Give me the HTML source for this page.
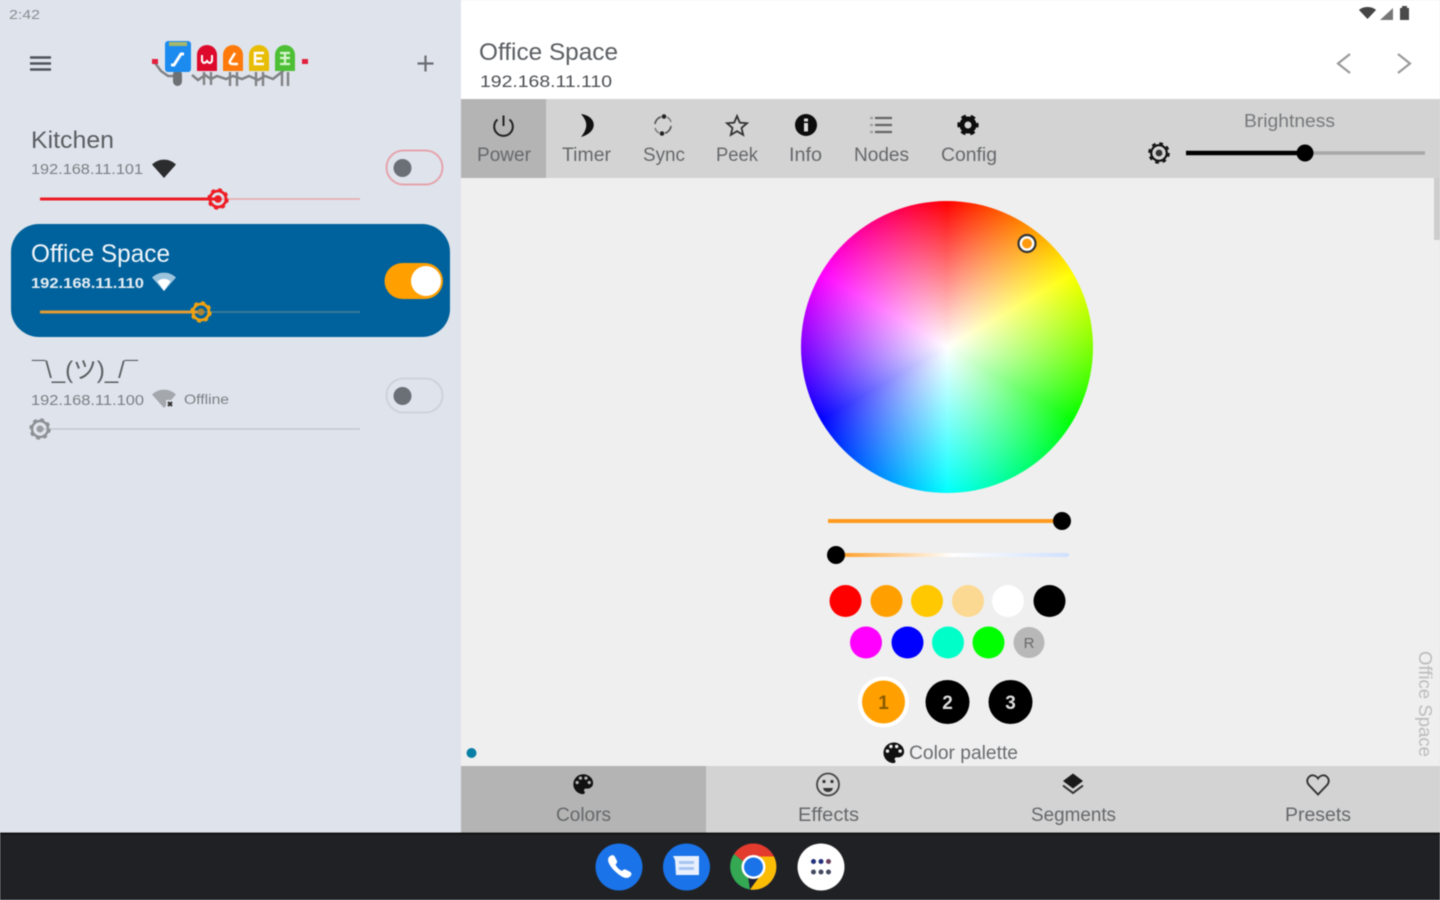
<!DOCTYPE html>
<html lang="en"><head><meta charset="utf-8"><title>WLED</title>
<style>
html,body{margin:0;padding:0;width:1440px;height:900px;overflow:hidden;background:#dfe4ec}
svg{display:block;filter:blur(.6px)}
text{font-family:"Liberation Sans","Noto Sans CJK JP",sans-serif}
</style></head><body>
<svg width="1440" height="900" viewBox="0 0 1440 900" xmlns="http://www.w3.org/2000/svg">
<defs>
<linearGradient id="cct" x1="0" x2="1" y1="0" y2="0"><stop offset="0" stop-color="#ff9a1f"/><stop offset=".5" stop-color="#fff"/><stop offset="1" stop-color="#cfe0ff"/></linearGradient>
<path id="wifi" d="M-12-4.500C-5-11 5-11 12-4.500L0 9Z"/>
<path id="palette" fill-rule="evenodd" d="M12 3a9 9 0 0 0 0 18c.83 0 1.500-.67 1.500-1.500 0-.39-.15-.74-.39-1.010-.23-.26-.38-.61-.38-.99 0-.83.67-1.500 1.500-1.500H16c2.760 0 5-2.240 5-5 0-4.420-4.030-8-9-8zm-5.500 9a1.500 1.500 0 1 1 0-3 1.500 1.500 0 0 1 0 3zm3-4a1.500 1.500 0 1 1 0-3 1.500 1.500 0 0 1 0 3zm5 0a1.500 1.500 0 1 1 0-3 1.500 1.500 0 0 1 0 3zm3 4a1.500 1.500 0 1 1 0-3 1.500 1.500 0 0 1 0 3z"/>
</defs>

<!-- backgrounds -->
<rect width="461" height="900" fill="#dfe4ec"/>
<rect x="461" width="979" height="99" fill="#fff"/>
<rect x="461" y="99" width="979" height="79" fill="#d3d3d3"/>
<rect x="461" y="99" width="85" height="79" fill="#b4b4b4"/>
<rect x="461" y="178" width="979" height="588" fill="#efefef"/>
<rect x="461" y="766" width="979" height="67" fill="#d3d3d3"/>
<rect x="461" y="766" width="245" height="67" fill="#b4b4b4"/>
<rect y="833" width="1440" height="67" fill="#202124"/>
<rect y="832.600" width="1440" height="1.600" fill="#0c0c0c"/>

<!-- left header -->
<text x="9" y="19" font-size="13" fill="#8a8d91" textLength="31" lengthAdjust="spacingAndGlyphs">2:42</text>
<g stroke="#50545a" stroke-width="2.400"><path d="M30 57.500H51M30 63.500H51M30 69.500H51"/></g>
<path d="M417.500 63.500H433.500M425.500 55.500V71.500" stroke="#6a6d72" stroke-width="2.200"/>

<!-- logo -->
<g>
<path d="M155 63L161 71L168 76H174M192 75l6 5 7-5 6 4 6-3 9 3 7-3 9 3 7-3 9 4 7-4 8 3 5-4 5-4 5-8" fill="none" stroke="#808285" stroke-width="2.500"/>
<path d="M204 72v13M211 72v13M230 72v14M237 72v14M256 72v14M263 72v14M282 72v14M288 72v14" stroke="#808285" stroke-width="2.400"/>
<rect x="173" y="70" width="9" height="16" rx="4.500" fill="#6e7174"/>
<rect x="152" y="59" width="6" height="5" fill="#e2203c"/><rect x="302" y="59" width="6" height="5" fill="#e2203c"/>
<rect x="165" y="41" width="26" height="31" rx="3" fill="#1b8bf0"/>
<rect x="169" y="42" width="18" height="4" fill="#a6b86a"/>
<path d="M171 65h3l7-11h3" fill="none" stroke="#fff" stroke-width="3"/>
<path d="M197 71V55a10 10 0 0 1 20 0V71Z" fill="#dd0a2c"/>
<path d="M223 71V55a10 10 0 0 1 20 0V71Z" fill="#ff7a0a"/>
<path d="M249 71V55a10 10 0 0 1 20 0V71Z" fill="#e8bd05"/>
<path d="M275 71V55a10 10 0 0 1 20 0V71Z" fill="#4dbf35"/>
<path d="M202 55v6q2 4 5 0q3 4 5 0v-6" fill="none" stroke="#fff" stroke-width="2"/>
<path d="M235 53l-5 8q-1 3 3 3h5" fill="none" stroke="#fff" stroke-width="2.500"/>
<path d="M264 53h-9v11h9M255 58.500h7" fill="none" stroke="#fff" stroke-width="2.400"/>
<path d="M280 53h10M280 64h10M285 53v11M280 58h10" fill="none" stroke="#d8f5cf" stroke-width="2.200"/>
</g>

<!-- Kitchen -->
<text x="31" y="148" font-size="24" fill="#5b5e62" textLength="83" lengthAdjust="spacingAndGlyphs">Kitchen</text>
<text x="31" y="174" font-size="14.500" fill="#7d8084" textLength="112" lengthAdjust="spacingAndGlyphs">192.168.11.101</text>
<use href="#wifi" x="164" y="169" fill="#2b2c2e"/>
<rect x="386.500" y="150.500" width="56" height="34" rx="17" fill="none" stroke="#e6a3ac" stroke-width="2"/>
<circle cx="402.500" cy="168" r="9" fill="#6b6f76"/>
<path d="M40 199H218" stroke="#ee1c24" stroke-width="3"/>
<path d="M218 199H360" stroke="#eba5a8" stroke-width="1.600"/>
<g transform="translate(218 199)" fill="none" stroke="#ee1c24">
<circle r="9.800" stroke-width="1.800" stroke-dasharray="3.800 3.900"/><circle r="8" stroke-width="2.800"/><circle r="3.800" fill="#ee1c24" stroke="none"/></g>

<!-- Office Space card -->
<rect x="11" y="224" width="439" height="113" rx="28" fill="#00629c"/>
<text x="31" y="262" font-size="25" fill="#f2f6fa" textLength="139" lengthAdjust="spacingAndGlyphs">Office Space</text>
<text x="31" y="288" font-size="15" fill="#e6edf3" font-weight="bold" textLength="113" lengthAdjust="spacingAndGlyphs">192.168.11.110</text>
<use href="#wifi" x="164" y="282" fill="#9cc4de"/>
<path d="M157.500 281.500C161 278 167 278 170.500 281.500L164 291Z" fill="#fff"/>
<rect x="384.500" y="263" width="58.500" height="36" rx="18" fill="#ff9f00"/>
<circle cx="426" cy="281" r="15" fill="#fff"/>
<path d="M40 312H201" stroke="#e29a34" stroke-width="3"/>
<path d="M201 312H360" stroke="#48809a" stroke-width="1.600"/>
<g transform="translate(201 312)" fill="none" stroke="#f2a10e">
<circle r="9.800" stroke-width="1.800" stroke-dasharray="3.800 3.900"/><circle r="8" stroke-width="2.800"/><circle r="3.500" fill="#a88536" stroke="none"/></g>

<!-- Offline -->
<text x="32" y="378" font-size="24" fill="#5b5e62" textLength="106" lengthAdjust="spacingAndGlyphs">¯\_(ツ)_/¯</text>
<text x="31" y="405" font-size="14.500" fill="#7d8084" textLength="113" lengthAdjust="spacingAndGlyphs">192.168.11.100</text>
<use href="#wifi" x="164" y="399" fill="#a4a7ab"/>
<rect x="166" y="400" width="10" height="9" fill="#dfe4ec"/>
<path d="M168 402l4 4M172 402l-4 4" stroke="#333" stroke-width="2"/>
<text x="184" y="404" font-size="14" fill="#7d8084" textLength="45" lengthAdjust="spacingAndGlyphs">Offline</text>
<rect x="386.500" y="378.500" width="56" height="34" rx="17" fill="none" stroke="#cfd2d8" stroke-width="2"/>
<circle cx="402.500" cy="396" r="9" fill="#6b6f76"/>
<path d="M40 429H360" stroke="#c4c7cb" stroke-width="1.600"/>
<g transform="translate(40 429)" fill="none" stroke="#8c8f93">
<circle r="9.800" stroke-width="1.800" stroke-dasharray="3.800 3.900"/><circle r="8" stroke-width="2.400"/><circle r="3.500" fill="#9a9da1" stroke="none"/></g>

<!-- right header -->
<text x="479" y="60" font-size="24" fill="#5b5e62" textLength="139" lengthAdjust="spacingAndGlyphs">Office Space</text>
<text x="480" y="87" font-size="17" fill="#4c4f53" textLength="132" lengthAdjust="spacingAndGlyphs">192.168.11.110</text>
<path d="M1359 10C1363 6 1372 6 1376 10L1367.500 19Z" fill="#444"/>
<path d="M1380 20L1393 8V20Z" fill="#777"/>
<path d="M1400 8h2v-2h5v2h2v12h-9Z" fill="#4a4a4a"/>
<path d="M1350 54L1338 63.500L1350 73" fill="none" stroke="#9a9a9a" stroke-width="2.200"/>
<path d="M1398 54L1410 63.500L1398 73" fill="none" stroke="#9a9a9a" stroke-width="2.200"/>

<!-- toolbar -->
<g font-size="19" fill="#66686b">
<text x="477" y="161" textLength="54" lengthAdjust="spacingAndGlyphs">Power</text>
<text x="562" y="161" textLength="49" lengthAdjust="spacingAndGlyphs">Timer</text>
<text x="643" y="161" textLength="42" lengthAdjust="spacingAndGlyphs">Sync</text>
<text x="716" y="161" textLength="42" lengthAdjust="spacingAndGlyphs">Peek</text>
<text x="789" y="161" textLength="33" lengthAdjust="spacingAndGlyphs">Info</text>
<text x="854" y="161" textLength="55" lengthAdjust="spacingAndGlyphs">Nodes</text>
<text x="941" y="161" textLength="56" lengthAdjust="spacingAndGlyphs">Config</text>
</g>
<!-- power -->
<path d="M497.500 119.500A9.300 9.300 0 1 0 509.500 119.500M503.500 115.500V126" fill="none" stroke="#222" stroke-width="2"/>
<!-- moon -->
<path d="M581 114C597 116 599 132 581 137C588 128 588 122 581 114Z" fill="#111"/>
<!-- sync -->
<path d="M655 124A8.500 8.500 0 0 1 661 116.800M671 126A8.500 8.500 0 0 1 665 133.200" fill="none" stroke="#555" stroke-width="1.700"/>
<path d="M667 117A8.500 8.500 0 0 1 671 122M659 133A8.500 8.500 0 0 1 655 128" fill="none" stroke="#777" stroke-width="1.400"/>
<circle cx="664" cy="116.500" r="2.300" fill="#222"/><circle cx="662" cy="133.500" r="2.300" fill="#222"/>
<!-- star -->
<path d="M737 116l2.800 6.600 7.200.6-5.500 4.700 1.700 7-6.200-3.700-6.200 3.700 1.700-7-5.500-4.700 7.200-.6Z" fill="none" stroke="#333" stroke-width="1.800"/>
<!-- info -->
<circle cx="806" cy="125" r="11" fill="#0d0d0d"/>
<rect x="804" y="123" width="4" height="8.500" fill="#ddd"/><rect x="804" y="118.500" width="4" height="3" fill="#ddd"/>
<!-- nodes -->
<path d="M875 118H892M875 125H892M875 132H892" stroke="#666" stroke-width="2.200"/>
<path d="M870 118H873M870 125H873M870 132H873" stroke="#a0a0a0" stroke-width="2.200"/>
<!-- config -->
<g transform="translate(968 125)"><circle r="6" fill="none" stroke="#0d0d0d" stroke-width="5"/><circle r="9" fill="none" stroke="#0d0d0d" stroke-width="3.200" stroke-dasharray="4.700 4.720" stroke-dashoffset="2.300"/></g>

<!-- brightness -->
<text x="1244" y="127" font-size="18" fill="#77797c" textLength="91" lengthAdjust="spacingAndGlyphs">Brightness</text>
<g transform="translate(1159 153)" fill="none" stroke="#111">
<circle r="9.800" stroke-width="2" stroke-dasharray="3.800 3.900"/><circle r="7.800" stroke-width="2.200"/><circle r="3.400" fill="#333" stroke="none"/></g>
<path d="M1186 153H1305" stroke="#000" stroke-width="4.500"/>
<path d="M1305 153H1425" stroke="#a8a8a8" stroke-width="3.500"/>
<circle cx="1305" cy="153" r="8.500" fill="#000"/>

<!-- scrollbar -->
<rect x="1434" y="178" width="6" height="62" fill="#cdcdcd"/>

<!-- wheel -->
<foreignObject x="801" y="201" width="292" height="292">
<div xmlns="http://www.w3.org/1999/xhtml" style="width:292px;height:292px;border-radius:50%;background:radial-gradient(closest-side,#fff,rgba(255,255,255,0)),conic-gradient(#f00,#ff0 60deg,#0f0 120deg,#0ff 180deg,#00f 240deg,#f0f 300deg,#f00)"></div>
</foreignObject>
<circle cx="1027" cy="243.500" r="8.500" fill="#fff" stroke="#333" stroke-width="2.200"/>
<circle cx="1027" cy="243.500" r="5" fill="#ff9a10"/>

<!-- sliders -->
<path d="M828 521H1062" stroke="#ff9a1f" stroke-width="4"/>
<circle cx="1062" cy="521" r="9" fill="#000"/>
<rect x="836" y="553" width="233" height="4" rx="2" fill="url(#cct)"/>
<circle cx="836" cy="555" r="9" fill="#000"/>

<!-- swatches -->
<circle cx="845.500" cy="601" r="16" fill="#f00"/>
<circle cx="886.500" cy="601" r="16" fill="#ffa000"/>
<circle cx="927" cy="601" r="16" fill="#ffc800"/>
<circle cx="968" cy="601" r="16" fill="#fcd992"/>
<circle cx="1008" cy="601" r="16" fill="#fff"/>
<circle cx="1049.500" cy="601" r="16" fill="#000"/>
<circle cx="866" cy="642.500" r="16" fill="#f0f"/>
<circle cx="907.500" cy="642.500" r="16" fill="#00f"/>
<circle cx="948" cy="642.500" r="16" fill="#00ffc8"/>
<circle cx="988.500" cy="642.500" r="16" fill="#0f0"/>
<circle cx="1029" cy="642.500" r="15.500" fill="#b8b8b8"/>
<text x="1029" y="648" font-size="15" fill="#6a6a6a" text-anchor="middle">R</text>

<!-- color slots -->
<circle cx="883.500" cy="702" r="25.500" fill="#fff"/>
<circle cx="883.500" cy="702" r="21.500" fill="#ffa000"/>
<circle cx="947.500" cy="702" r="22" fill="#000"/>
<circle cx="1010.500" cy="702" r="22" fill="#000"/>
<g font-size="19" font-weight="bold" text-anchor="middle">
<text x="883.500" y="709" fill="#8a5a00">1</text>
<text x="947.500" y="709" fill="#ddd">2</text>
<text x="1010.500" y="709" fill="#ddd">3</text>
</g>

<!-- palette label -->
<use href="#palette" transform="translate(880 739) scale(1.150)" fill="#111"/>
<text x="909" y="759" font-size="19" fill="#6a6c6f" textLength="109" lengthAdjust="spacingAndGlyphs">Color palette</text>
<circle cx="471.500" cy="753" r="5" fill="#0a7fa5"/>
<text transform="translate(1419 651) rotate(90)" font-size="18" fill="#bcbcbc" textLength="106" lengthAdjust="spacingAndGlyphs">Office Space</text>

<!-- bottom tabs -->
<g font-size="19" fill="#66686b">
<text x="556" y="821" textLength="55" lengthAdjust="spacingAndGlyphs">Colors</text>
<text x="798" y="821" textLength="61" lengthAdjust="spacingAndGlyphs">Effects</text>
<text x="1031" y="821" textLength="85" lengthAdjust="spacingAndGlyphs">Segments</text>
<text x="1285" y="821" textLength="66" lengthAdjust="spacingAndGlyphs">Presets</text>
</g>
<use href="#palette" transform="translate(570 771) scale(1.100)" fill="#111"/>
<circle cx="828" cy="784.500" r="11" fill="none" stroke="#444" stroke-width="1.800"/>
<circle cx="824" cy="781.500" r="1.600" fill="#333"/><circle cx="832" cy="781.500" r="1.600" fill="#333"/>
<path d="M823 788h10q-1 4-5 4t-5-4Z" fill="#333"/>
<path d="M1073 773.500L1083 781L1073 788.500L1063 781Z" fill="#1a1a1a"/>
<path d="M1063 785.500L1073 793L1083 785.500" fill="none" stroke="#333" stroke-width="2"/>
<path d="M1318 794.500L1308.500 784.500C1305 779 1310 774.500 1314 775.500C1316 776 1317 777 1318 778.500C1319 777 1320 776 1322 775.500C1326 774.500 1331 779 1327.500 784.500Z" fill="none" stroke="#333" stroke-width="1.900"/>

<!-- dock -->
<circle cx="619" cy="867" r="23.500" fill="#1a73e8"/>
<path d="M609 857c3-3 5-2 6 0l2 4c.5 1.500-.5 2.500-1.500 3.500 1.500 3 3.500 5 6.500 6.500 1-1 2-2 3.500-1.500l4 2c2 1 3 3 .5 5-3 3-8 1-13-3.500-6-5-11-12-8-16Z" fill="#fff"/>
<circle cx="686.500" cy="867" r="23.500" fill="#1a73e8"/>
<path d="M673 856h26v19h-23l-1-15Z" fill="#e8f0fe"/>
<rect x="679" y="861" width="15" height="3" fill="#a8c4f2"/><rect x="679" y="867" width="15" height="3" fill="#a8c4f2"/>
<circle cx="753.500" cy="867" r="23.500" fill="#1c1e33"/>
<path d="M734 854A23 23 0 0 1 774 856.500L753.500 856.500A10.500 10.500 0 0 0 744 862Z" fill="#e33b2e"/>
<path d="M734 854L744 862L748 876L750 889.500A23 23 0 0 1 734 854Z" fill="#34a853"/>
<path d="M774 856.500A23 23 0 0 1 750 889.500L762 873L753.500 856.500Z" fill="#fbbc04"/>
<circle cx="753.500" cy="867" r="12" fill="#fff"/><circle cx="753.500" cy="867" r="9.500" fill="#1a73e8"/>
<circle cx="821" cy="867" r="23.500" fill="#fff"/>
<g fill="#23307a"><circle cx="813.500" cy="861.500" r="2.500"/><circle cx="821" cy="861.500" r="2.500"/></g>
<circle cx="828.500" cy="861.500" r="2.500" fill="#6b4060"/>
<g fill="#444a60"><circle cx="813.500" cy="872" r="2.500"/><circle cx="821" cy="872" r="2.500"/><circle cx="828.500" cy="872" r="2.500"/></g>
</svg>
</body></html>
